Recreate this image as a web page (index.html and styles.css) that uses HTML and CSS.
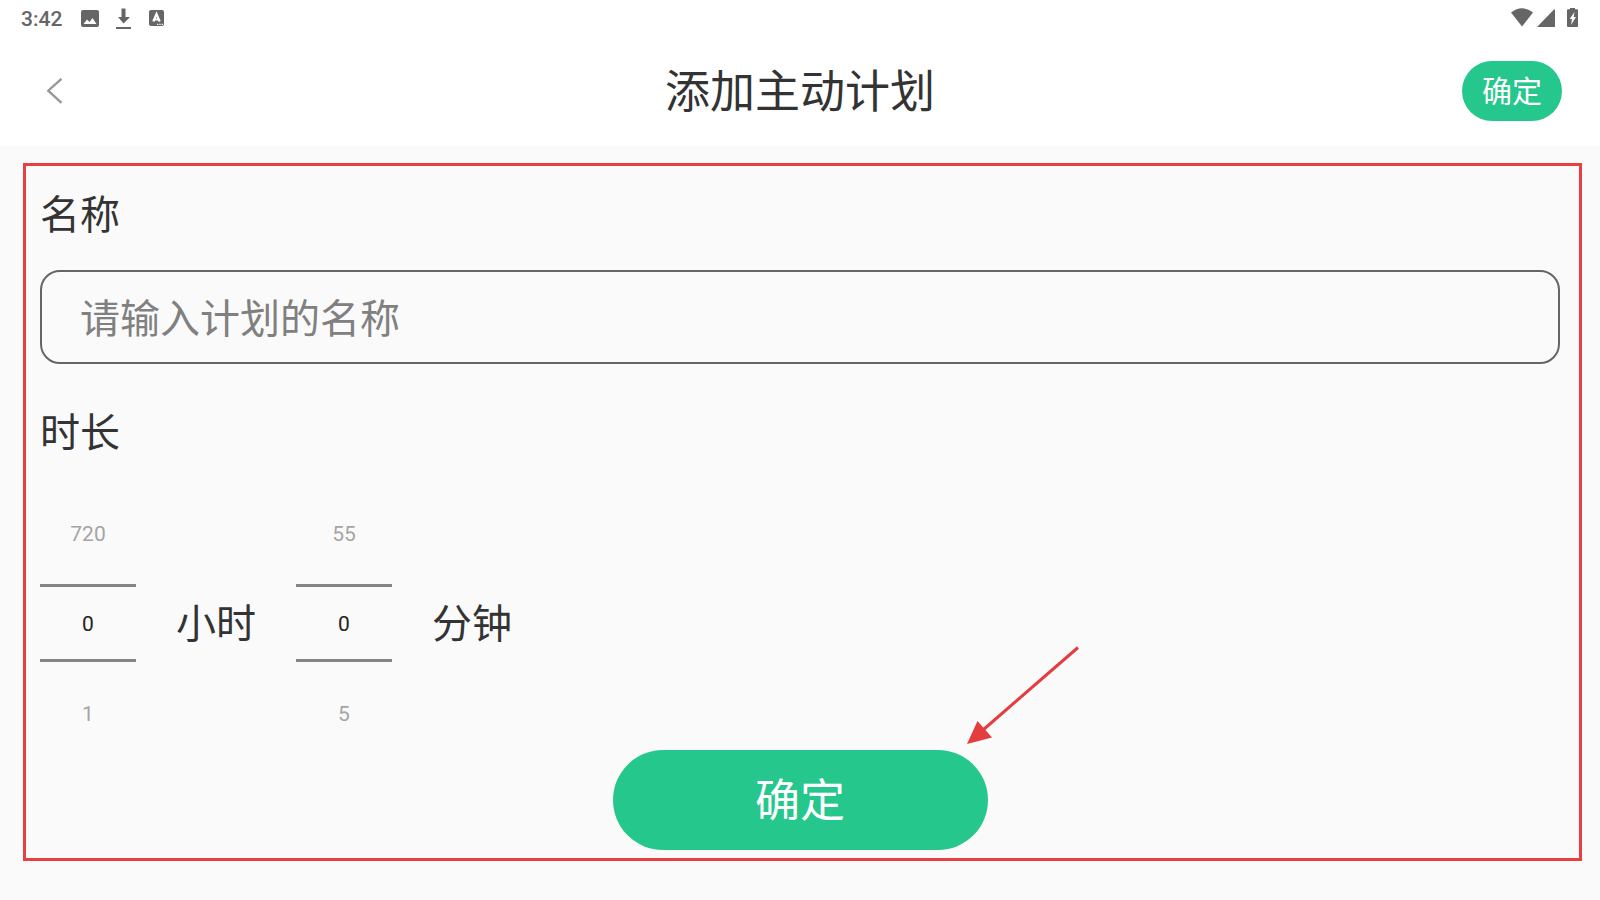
FILE: index.html
```
<!DOCTYPE html>
<html lang="zh-CN">
<head>
  <meta charset="UTF-8" />
  <meta name="viewport" content="width=device-width, initial-scale=1.0"/>
  <title>添加主动计划</title>
  <link rel="stylesheet" href="styles.css">
</head>
<body>

  <header class="top">
    <div class="status-bar">
      <div class="status-left">
        <span class="clock">3:42</span>
        <svg class="icon-picture" width="18" height="18" viewBox="0 0 18 18" aria-hidden="true">
          <path fill="#666" fill-rule="evenodd" d="M2 0h14q2 0 2 2v13q0 2-2 2H2q-2 0-2-2V2Q0 0 2 0zM2.500 14h13L11.500 8 8.500 12 6 9.500z"/>
        </svg>
        <svg class="icon-download" width="16" height="22" viewBox="0 0 16 22" aria-hidden="true">
          <path fill="#666" d="M5.500 0.500h4V9H14L7.500 15.500 2 9h3.500zM0 19h15v2H0z"/>
        </svg>
        <svg class="icon-letter" width="16" height="17" viewBox="0 0 16 17" aria-hidden="true">
          <rect width="15" height="16" rx="2" fill="#666"/>
          <path d="M4.300 11.500L7.500 4l3.200 7.500M5.500 9.500h4" fill="none" stroke="#fff" stroke-width="2.200"/>
          <path d="M8 14.300h6" stroke="#fff" stroke-width="1.300" stroke-dasharray="1.300 1"/>
        </svg>
      </div>
      <div class="status-right">
        <svg width="22" height="20" viewBox="0 0 22 20" aria-hidden="true">
          <path fill="#666" d="M0 4.500Q11-4 22 4.500L11 18.500z"/>
        </svg>
        <svg class="icon-signal" width="18" height="20" viewBox="0 0 18 20" aria-hidden="true">
          <path fill="#666" d="M0 19L17 1.500q1-.8 1 .5V19z"/>
        </svg>
        <svg width="11" height="20" viewBox="0 0 11 20" aria-hidden="true">
          <path fill="#666" d="M3 0h5v1.200h2q1 0 1 1V18q0 1-1 1H1q-1 0-1-1V2.200q0-1 1-1h2z"/>
          <path fill="#fff" d="M7.500 4L2.700 11h2.300L4 17 9 9H6.700z"/>
        </svg>
      </div>
    </div>

    <div class="app-bar">
      <button class="back" type="button" aria-label="返回">
        <svg width="16" height="26" viewBox="0 0 16 26" aria-hidden="true">
          <path d="M14.500 0.800L1.200 12.700 14.500 24.800" fill="none" stroke="#999" stroke-width="2.400"/>
        </svg>
      </button>
      <h1>添加主动计划</h1>
      <button class="confirm-small" type="submit" form="planForm">确定</button>
    </div>
  </header>

  <form class="plan-form" id="planForm">
    <label class="field-label" for="planName">名称</label>
    <input class="name-input" type="text" id="planName" placeholder="请输入计划的名称" />

    <h2 class="field-label">时长</h2>
    <div class="duration">
      <div class="picker">
        <button type="button">720</button>
        <input type="text" inputmode="numeric" id="hours" value="0" />
        <button type="button">1</button>
      </div>
      <label class="unit" for="hours">小时</label>
      <div class="picker">
        <button type="button">55</button>
        <input type="text" inputmode="numeric" id="minutes" value="0" />
        <button type="button">5</button>
      </div>
      <label class="unit" for="minutes">分钟</label>
    </div>

    <div class="actions">
      <button class="confirm" type="submit">确定</button>
      <!-- 指向确定按钮的箭头 -->
      <svg class="arrow" width="114" height="98" viewBox="0 0 114 98" aria-hidden="true">
        <path d="M111 1.500L16 84" stroke="#e43d3f" stroke-width="3"/>
        <path d="M0 98L10.500 75 25 91.500z" fill="#e43d3f"/>
      </svg>
    </div>
  </form>

</body>
</html>
```

FILE: styles.css
```
* { box-sizing: border-box; margin: 0; padding: 0; }
body {
  font-family: "Noto Sans CJK SC", sans-serif;
  background: #fafafa;
  color: #333;
}
button, input {
  font-family: inherit;
  border: none;
  background: none;
}
button {
  cursor: pointer;
}
svg {
  display: block;
}
.top {
  background: #fff;
}

/* 状态栏 */
.status-bar {
  display: flex;
  justify-content: space-between;
  align-items: center;
  height: 36px;
  padding: 0 22px 0 21px;
}
.status-left,
.status-right {
  display: flex;
  align-items: center;
}
.status-left {
  gap: 17px;
  padding-top: 1px;
}
.status-right {
  gap: 4px;
}
.icon-signal {
  margin-right: 8px;
}
.clock {
  margin-right: 2px;
  font-family: Roboto, sans-serif;
  font-size: 21px;
  font-weight: 500;
  line-height: 24px;
  color: #666;
}

/* 标题栏 */
.app-bar {
  display: grid;
  grid-template-columns: 1fr auto 1fr;
  align-items: center;
  height: 110px;
  padding: 0 38px;
}
.app-bar h1 {
  padding-bottom: 4px;
  font-size: 45px;
  font-weight: 400;
  line-height: 60px;
}
.back {
  justify-self: start;
  padding: 8px 9px;
}
.confirm-small {
  justify-self: end;
  width: 100px;
  height: 60px;
  padding-bottom: 4px;
  border-radius: 30px;
  background: #26c78c;
  color: #fff;
  font-size: 30px;
}

/* 表单 */
.plan-form {
  margin: 17px 18px 38px 23px;
  padding: 16px 19px 8px 14px;
  border: 3px solid #e84042;
}
.field-label {
  display: block;
  font-size: 40px;
  font-weight: 400;
  line-height: 60px;
}
.name-input {
  display: block;
  width: 100%;
  height: 94px;
  margin: 28px 0 36px;
  padding: 0 38px 2px;
  border: 2px solid #666;
  border-radius: 20px;
  font-size: 40px;
  color: #333;
}
.name-input::placeholder {
  color: #808080;
}
.duration {
  display: flex;
  align-items: center;
  gap: 40px;
  margin-top: 54px;
}
.picker {
  display: flex;
  flex-direction: column;
  gap: 32px;
  width: 96px;
  font-family: Roboto, sans-serif;
}
.picker button {
  height: 38px;
  padding-top: 2px;
  font-size: 21px;
  color: #a5a5a5;
}
.picker input {
  width: 100%;
  height: 78px;
  padding-top: 2px;
  border-top: 3px solid #858585;
  border-bottom: 3px solid #858585;
  font-size: 21px;
  text-align: center;
  color: #222;
}
.unit {
  padding-bottom: 4px;
  font-size: 40px;
  line-height: 60px;
}
.actions {
  position: relative;
  display: flex;
  justify-content: center;
  margin-top: 18px;
}
.confirm {
  width: 375px;
  height: 100px;
  padding-bottom: 6px;
  border-radius: 50px;
  background: #26c78c;
  color: #fff;
  font-size: 45px;
}
.arrow {
  position: absolute;
  left: calc(50% + 167px);
  bottom: 106px;
}
```
